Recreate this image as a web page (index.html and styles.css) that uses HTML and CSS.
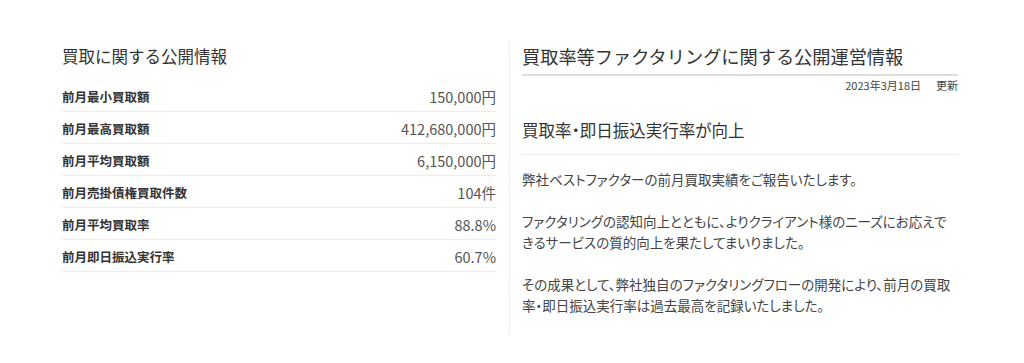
FILE: index.html
```html
<!DOCTYPE html>
<html lang="ja">
<head>
<meta charset="utf-8">
<title>公開情報</title>
<link rel="stylesheet" href="styles.css">
</head>
<body>
<div class="wrap">
  <section class="left">
    <h2 class="left-title">買取に関する公開情報</h2>
    <dl class="stats">
      <div class="row"><dt>前月最小買取額</dt><dd>150,000円</dd></div>
      <div class="row"><dt>前月最高買取額</dt><dd>412,680,000円</dd></div>
      <div class="row"><dt>前月平均買取額</dt><dd>6,150,000円</dd></div>
      <div class="row"><dt>前月売掛債権買取件数</dt><dd>104件</dd></div>
      <div class="row"><dt>前月平均買取率</dt><dd>88.8%</dd></div>
      <div class="row"><dt>前月即日振込実行率</dt><dd>60.7%</dd></div>
    </dl>
  </section>
  <section class="right">
    <h2 class="right-title">買取率等ファクタリングに関する公開運営情報</h2>
    <p class="date">2023年3月18日<span class="upd">更新</span></p>
    <h3 class="sub">買取率・即日振込実行率が向上</h3>
    <div class="body">
      <p>弊社ベストファクターの前月買取実績をご報告いたします。</p>
      <p>ファクタリングの認知向上とともに、よりクライアント様のニーズにお応えできるサービスの質的向上を果たしてまいりました。</p>
      <p>その成果として、弊社独自のファクタリングフローの開発により、前月の買取率・即日振込実行率は過去最高を記録いたしました。</p>
    </div>
  </section>
</div>
</body>
</html>
```
FILE: styles.css
```css
* { box-sizing: border-box; }
html, body { margin: 0; padding: 0; background: #fff; }
body {
  font-family: "Noto Sans CJK JP", "Noto Sans", sans-serif;
  color: #333;
}
.wrap {
  display: flex;
  width: 896px;
  margin: 42px 0 0 62px;
}
.left {
  width: 447px;
  padding-right: 13px;
}
.left-title {
  margin: 2px 0 0;
  font-size: 16.5px;
  line-height: 24px;
  font-weight: 400;
  color: #333;
}
.stats {
  margin: 12px 0 0;
}
.row {
  display: flex;
  justify-content: space-between;
  align-items: center;
  height: 32px;
  border-bottom: 1px solid #ececec;
  padding-top: 2px;
}
.row dt {
  font-size: 12.5px;
  font-weight: 700;
  color: #333;
}
.row dd {
  margin: 0;
  font-size: 14.5px;
  color: #555;
  font-weight: 400;
}
.right {
  flex: 1;
  border-left: 1px solid #f0f0f0;
  padding: 0 0 18px 12px;
}
.right-title {
  margin: 0;
  font-size: 18.2px;
  line-height: 28px;
  font-weight: 400;
  color: #333;
  padding-bottom: 4px;
  border-bottom: 2px solid #dcdcdc;
}
.date {
  margin: 2px 0 0;
  text-align: right;
  font-size: 11px;
  line-height: 14px;
  color: #444;
}
.upd { margin-left: 15px; }
.sub {
  margin: 26px 0 0;
  font-size: 16.5px;
  line-height: 24px;
  font-weight: 400;
  color: #333;
  padding-bottom: 12px;
  border-bottom: 1px solid #ececec;
  font-feature-settings: "palt";
}
.body {
  padding-top: 14px;
  font-size: 13.5px;
  line-height: 21px;
  color: #444;
  font-feature-settings: "palt";
}
.body p { margin: 0 0 21px; }
.body p:last-child { margin-bottom: 0; }
```
